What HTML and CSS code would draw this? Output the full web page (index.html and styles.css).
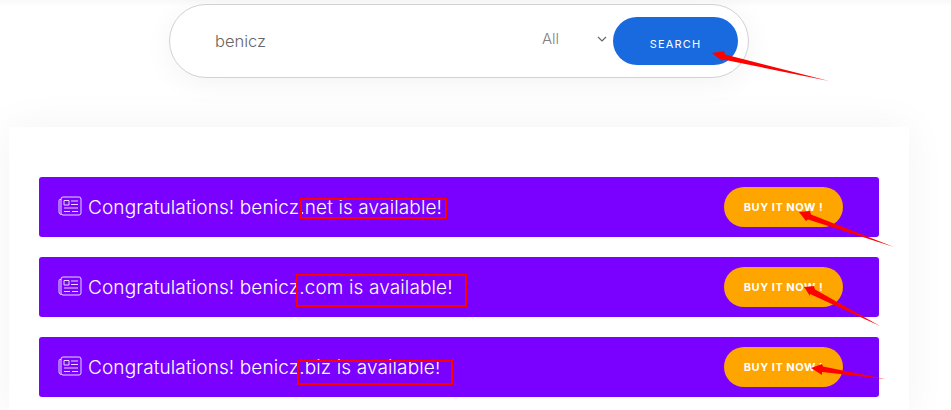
FILE: index.html
```html
<!DOCTYPE html>
<html lang="en">
<head>
    <meta charset="UTF-8">
    <meta name="viewport" content="width=device-width, initial-scale=1.0">
    <title>Domain Search</title>
    <link rel="stylesheet" href="styles.css">
</head>
<body>
    <div class="page">
        <div class="search-bar">
            <div class="search-input">benicz</div>
            <div class="search-select">
                <span>All</span>
                <svg class="chevron" viewBox="0 0 10 6">
                    <path d="M1 1l4 4l4-4"></path>
                </svg>
            </div>
            <button class="search-button">SEARCH</button>
        </div>

        <div class="results">
            <div class="result-row">
                <div class="result-text">
                    <svg class="result-icon" viewBox="0 0 24 20">
                        <path d="M5 1h16a2 2 0 0 1 2 2v14a2 2 0 0 1-2 2H5a2 2 0 0 1-2-2V3a2 2 0 0 1 2-2z"></path>
                        <path d="M3 3.500H2a1 1 0 0 0-1 1V16a2.500 2.500 0 0 0 2 2.500"></path>
                        <path d="M6 4.500h5v4.500H6zM13 5h7M13 8.500h7M6 12h14M6 15.500h6M14 15.500h6"></path>
                    </svg>
                    <span>Congratulations! benicz.net is available!</span>
                </div>
                <button class="buy-button">BUY IT NOW !</button>
            </div>
            <div class="result-row">
                <div class="result-text">
                    <svg class="result-icon" viewBox="0 0 24 20">
                        <path d="M5 1h16a2 2 0 0 1 2 2v14a2 2 0 0 1-2 2H5a2 2 0 0 1-2-2V3a2 2 0 0 1 2-2z"></path>
                        <path d="M3 3.500H2a1 1 0 0 0-1 1V16a2.500 2.500 0 0 0 2 2.500"></path>
                        <path d="M6 4.500h5v4.500H6zM13 5h7M13 8.500h7M6 12h14M6 15.500h6M14 15.500h6"></path>
                    </svg>
                    <span>Congratulations! benicz.com is available!</span>
                </div>
                <button class="buy-button">BUY IT NOW !</button>
            </div>
            <div class="result-row">
                <div class="result-text">
                    <svg class="result-icon" viewBox="0 0 24 20">
                        <path d="M5 1h16a2 2 0 0 1 2 2v14a2 2 0 0 1-2 2H5a2 2 0 0 1-2-2V3a2 2 0 0 1 2-2z"></path>
                        <path d="M3 3.500H2a1 1 0 0 0-1 1V16a2.500 2.500 0 0 0 2 2.500"></path>
                        <path d="M6 4.500h5v4.500H6zM13 5h7M13 8.500h7M6 12h14M6 15.500h6M14 15.500h6"></path>
                    </svg>
                    <span>Congratulations! benicz.biz is available!</span>
                </div>
                <button class="buy-button">BUY IT NOW !</button>
            </div>
        </div>
    </div>

    <!-- red markup drawn over the page -->
    <svg class="markup" viewBox="0 0 951 410">
        <rect x="301" y="199" width="145" height="19"></rect>
        <rect x="297" y="275" width="169" height="31"></rect>
        <rect x="298" y="361" width="154" height="23"></rect>
        <polygon points="712,53 724,51 725,54.500 829,81 723,59.500 722,61"></polygon>
        <polygon points="799,212 810,211 811,214.500 894,247 808,219.500 806,221"></polygon>
        <polygon points="804,287 814,286 815,289.500 880,326 810,294 810,296"></polygon>
        <polygon points="811,368 822,364 823,366.500 885,379 822,372 822,375"></polygon>
    </svg>
</body>
</html>
```

FILE: styles.css
```css
* {
    margin: 0;
    padding: 0;
    box-sizing: border-box;
}

body {
    font-family: "Inter", "Liberation Sans", sans-serif;
    background: white;
    box-shadow: inset 0 6px 6px -4px rgba(0, 0, 0, 0.04);
    height: 410px;
    overflow: hidden;
    position: relative;
}

.page {
    width: 900px;
    margin-left: 9px;
    padding-top: 4px;
}

.search-bar {
    width: 580px;
    height: 74px;
    margin: 0 auto 49px;
    padding: 0 10px 0 45px;
    display: flex;
    align-items: center;
    background: white;
    border: 1px solid #d2d2d2;
    border-radius: 37px;
    box-shadow: 0 5px 30px rgba(0, 0, 0, 0.05);
}

.search-input {
    flex: 1;
    font-size: 16.500px;
    font-weight: 300;
    color: #666;
}

.search-select {
    width: 65px;
    display: flex;
    align-items: center;
    justify-content: space-between;
    margin-top: -6px;
    font-size: 15px;
    font-weight: 300;
    color: #808080;
}

.chevron {
    width: 10px;
    height: 6px;
    margin-top: 2px;
    stroke: #666;
    stroke-width: 1.2;
    fill: none;
}

.search-button {
    width: 125px;
    height: 48px;
    margin-left: 6px;
    margin-top: -1px;
    border: none;
    border-radius: 24px;
    background: #1a6adf;
    color: white;
    font-family: inherit;
    font-size: 11px;
    font-weight: 400;
    letter-spacing: 1.200px;
    padding-top: 6px;
}

.results {
    height: 290px;
    padding: 50px 30px 0;
    display: flex;
    flex-direction: column;
    gap: 20px;
    background: white;
    box-shadow: 0 0 40px rgba(0, 0, 0, 0.05);
}

.result-row {
    height: 60px;
    padding: 0 36px 0 19px;
    display: flex;
    align-items: center;
    justify-content: space-between;
    background: #7a00ff;
    border-radius: 3px;
}

.result-text {
    display: flex;
    align-items: center;
    gap: 6px;
    font-size: 19px;
    font-weight: 300;
    letter-spacing: 0.120px;
    color: white;
}

.result-icon {
    width: 24px;
    height: 20px;
    margin-top: -3px;
    stroke: white;
    stroke-width: 1;
    fill: none;
    opacity: 0.85;
}

.buy-button {
    width: 119px;
    height: 40px;
    border: none;
    border-radius: 20px;
    background: #ffa500;
    color: white;
    font-family: inherit;
    font-size: 11px;
    font-weight: 700;
    letter-spacing: 0.500px;
}

.markup {
    position: absolute;
    top: 0;
    left: 0;
    width: 951px;
    height: 410px;
}

.markup rect {
    fill: none;
    stroke: #f00;
    stroke-width: 2;
}

.markup polygon {
    fill: #f00;
}
```
